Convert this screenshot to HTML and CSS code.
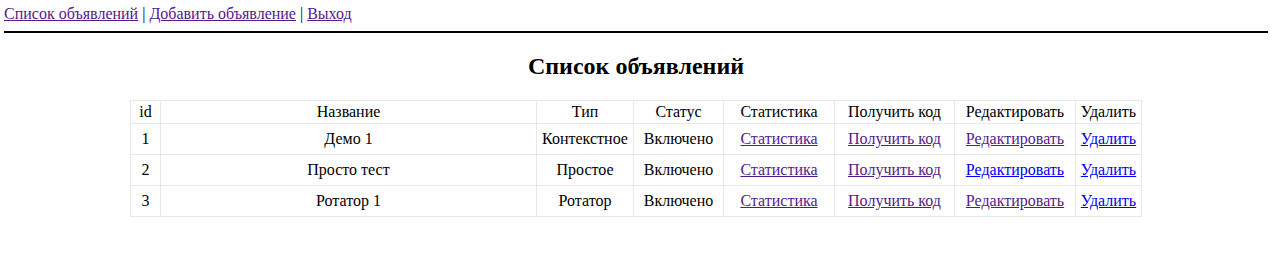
FILE: index.html
```html
<!DOCTYPE html>
<html lang="ru">
<head>
<meta charset="utf-8">
<title>Список объявлений</title>
<link rel="stylesheet" href="styles.css">
</head>
<body>
<nav class="topnav"><a class="visited" href="#">Список объявлений</a> | <a class="visited" href="#">Добавить объявление</a> | <a class="visited" href="#">Выход</a></nav>
<hr class="rule">
<h2 class="title">Список объявлений</h2>
<table class="ads">
<colgroup>
<col class="c-id"><col class="c-name"><col class="c-type"><col class="c-status"><col class="c-stat"><col class="c-code"><col class="c-edit"><col class="c-del">
</colgroup>
<thead>
<tr><th>id</th><th>Название</th><th>Тип</th><th>Статус</th><th>Статистика</th><th>Получить код</th><th>Редактировать</th><th>Удалить</th></tr>
</thead>
<tbody>
<tr><td>1</td><td>Демо 1</td><td>Контекстное</td><td>Включено</td><td><a class="visited" href="#">Статистика</a></td><td><a class="visited" href="#">Получить код</a></td><td><a class="visited" href="#">Редактировать</a></td><td><a class="link" href="#">Удалить</a></td></tr>
<tr><td>2</td><td>Просто тест</td><td>Простое</td><td>Включено</td><td><a class="visited" href="#">Статистика</a></td><td><a class="visited" href="#">Получить код</a></td><td><a class="link" href="#">Редактировать</a></td><td><a class="link" href="#">Удалить</a></td></tr>
<tr><td>3</td><td>Ротатор 1</td><td>Ротатор</td><td>Включено</td><td><a class="visited" href="#">Статистика</a></td><td><a class="visited" href="#">Получить код</a></td><td><a class="visited" href="#">Редактировать</a></td><td><a class="link" href="#">Удалить</a></td></tr>
</tbody>
</table>
</body>
</html>
```

FILE: styles.css
```css
html, body {
  background: #ffffff;
}
body {
  margin: 5px 12px 0 4px;
  font-family: "Liberation Serif", "Times New Roman", serif;
  font-size: 16px;
  color: #000000;
}
a.visited { color: #551a8b; text-decoration: underline; }
a.link { color: #0000ee; text-decoration: underline; }
.topnav {
  display: block;
  line-height: normal;
}
.rule {
  margin: 8px 0;
  border: 0;
  border-top: 2px solid #000000;
  height: 0;
}
.title {
  text-align: center;
  font-size: 24px;
  font-weight: bold;
  margin: 20px 0;
}
.ads {
  width: 80%;
  margin: 0 auto;
  border-collapse: collapse;
  table-layout: fixed;
}
.ads th, .ads td {
  border: 1px solid #e8e8e8;
  text-align: center;
  font-weight: normal;
  white-space: nowrap;
  padding: 2px 4px;
}
.ads td {
  padding: 6px 4px;
}
.c-id { width: 30px; }
.c-name { width: 376px; }
.c-type { width: 97px; }
.c-status { width: 90px; }
.c-stat { width: 111px; }
.c-code { width: 120px; }
.c-edit { width: 121px; }
.c-del { width: 66px; }
```
